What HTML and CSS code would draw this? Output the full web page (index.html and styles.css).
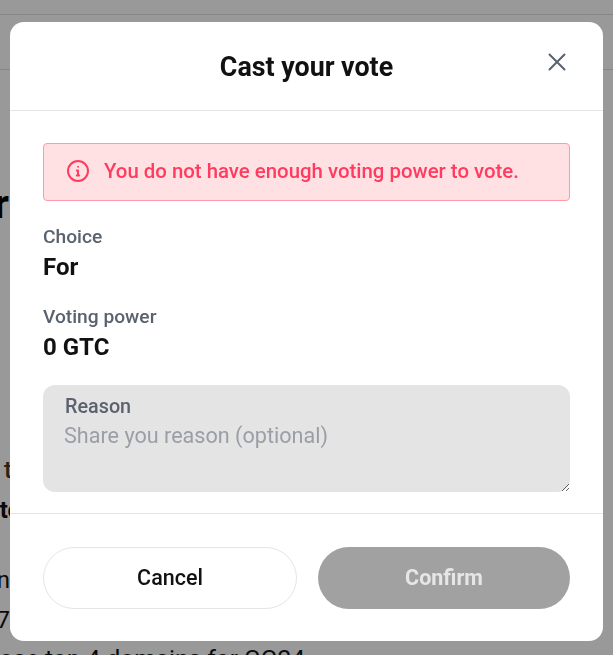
FILE: index.html
```html
<!DOCTYPE html>
<html lang="en">
<head>
<meta charset="utf-8">
<title>Cast your vote</title>
<link rel="stylesheet" href="styles.css">
</head>
<body>
<div class="page">
  <div class="topbar"></div>
  <div class="subbar"></div>
  <div class="bg-heading"><span>Proposal for</span></div>
  <div class="bg-copy">
    <p class="bg-row bg-amber"><span>Voting is open to all t</span></p>
    <p class="bg-row bg-strong"><span>Gitcoin holders vote to</span></p>
    <p class="bg-row bg-gap"><span>Domain selection</span></p>
    <p class="bg-row"><span>Out of 17</span></p>
    <p class="bg-row bg-last"><span>Choose top 4 domains for GG24</span></p>
  </div>
</div>
<div class="overlay"></div>
<div class="modal" role="dialog" aria-label="Cast your vote">
  <header class="modal-head">
    <h1>Cast your vote</h1>
    <button class="close" aria-label="Close">
      <svg width="24" height="24" viewBox="0 0 24 24" fill="none" stroke="#59626e" stroke-width="2" stroke-linecap="round"><path d="M4.5 4.5l15 15M19.5 4.5l-15 15"/></svg>
    </button>
  </header>
  <section class="modal-body">
    <div class="alert">
      <svg width="24" height="24" viewBox="0 0 24 24" fill="none" stroke="#ff3b5f" stroke-width="2" stroke-linecap="round" stroke-linejoin="round"><circle cx="12" cy="12" r="10"/><path d="M10.8 11.5H12v5M10.8 16.5h2.4"/><circle cx="12" cy="7.8" r=".5" fill="#ff3b5f" stroke-width="1"/></svg>
      <span>You do not have enough voting power to vote.</span>
    </div>
    <div class="stat">
      <div class="stat-label">Choice</div>
      <div class="stat-value">For</div>
    </div>
    <div class="stat">
      <div class="stat-label">Voting power</div>
      <div class="stat-value">0 GTC</div>
    </div>
    <div class="reason">
      <label for="reason">Reason</label>
      <textarea id="reason" placeholder="Share you reason (optional)"></textarea>
    </div>
  </section>
  <footer class="modal-foot">
    <button class="btn btn-cancel">Cancel</button>
    <button class="btn btn-confirm">Confirm</button>
  </footer>
</div>
</body>
</html>
```
FILE: styles.css
```css
* { box-sizing: border-box; }
html, body { margin: 0; height: 100%; overflow: hidden; }
body { font-family: Roboto, "Liberation Sans", sans-serif; background: #fff; color: #111; }
.page { height: 655px; overflow: hidden; }
.topbar { height: 15px; border-bottom: 1px solid #e0e0e0; }
.subbar { height: 55px; border-bottom: 1px solid #e0e0e0; }
.bg-heading { margin-top: 111px; width: 9px; display: flex; justify-content: flex-end; font-size: 40px; line-height: 48px; font-weight: 700; white-space: nowrap; color: #000; }
.bg-heading span, .bg-row span { flex: none; }
.bg-copy { margin-top: 221px; font-size: 24px; white-space: nowrap; }
.bg-row { margin: 0; width: 10px; height: 40px; line-height: 40px; display: flex; justify-content: flex-end; color: #111; }
.bg-amber { width: 12px; color: #4a3a18; font-weight: 500; }
.bg-strong { width: 21px; font-weight: 700; color: #111; }
.bg-gap { margin-top: 30px; }
.bg-last { width: 305px; height: 30px; line-height: 38px; font-size: 24.5px; }
.overlay { position: fixed; inset: 0; background: rgba(0, 0, 0, .4); }
.modal { position: fixed; left: 10px; top: 22px; width: 593px; height: 619px; background: #fff; border-radius: 14px; display: flex; flex-direction: column; }
.modal-head { height: 89px; border-bottom: 1px solid #e5e5e5; display: flex; align-items: center; justify-content: center; position: relative; flex: none; }
.modal-head h1 { margin: 0; padding-top: 1px; font-size: 26.8px; font-weight: 700; line-height: 32px; color: #111; }
.close { position: absolute; right: 34px; top: 28px; width: 24px; height: 24px; padding: 0; border: 0; background: none; }
.close svg { display: block; }
.modal-body { flex: 1; padding: 32px 33px 21px; display: flex; flex-direction: column; }
.alert { height: 58px; display: flex; align-items: center; gap: 14px; padding: 0 0 2px 22px; background: #ffe0e3; border: 1px solid #ff9aa8; border-radius: 4px; color: #ff3b5f; font-size: 20.4px; font-weight: 500; }
.alert svg { flex: none; }
.stat { margin-top: 24px; }
.stat + .stat { margin-top: 20px; }
.stat-label { font-size: 19.2px; line-height: 24px; font-weight: 500; color: #59626e; }
.stat-value { font-size: 24px; line-height: 36px; font-weight: 700; color: #111; }
.reason { position: relative; margin-top: 20px; flex: 1; display: flex; }
.reason label { position: absolute; left: 22px; top: 10px; font-size: 19.8px; line-height: 24px; font-weight: 500; color: #59626e; }
.reason textarea { flex: 1; display: block; background: #e4e4e4; border: 0; outline: 0; border-radius: 12px; padding: 37px 21px 0; font: 400 21.6px/28px Roboto, "Liberation Sans", sans-serif; color: #111; resize: vertical; }
.reason textarea::placeholder { color: #9a9ea6; opacity: 1; }
.modal-foot { flex: none; height: 128px; border-top: 1px solid #e5e5e5; padding: 33px 33px 0; display: flex; gap: 21px; }
.btn { flex: 1 1 0; min-width: 0; height: 62px; border-radius: 31px; font: 500 21.5px/28px Roboto, "Liberation Sans", sans-serif; }
.btn-cancel { background: #fff; border: 1px solid #e5e5e5; color: #111; }
.btn-confirm { background: #a1a1a1; border: 0; color: #e6e6e6; font-weight: 700; }
```
